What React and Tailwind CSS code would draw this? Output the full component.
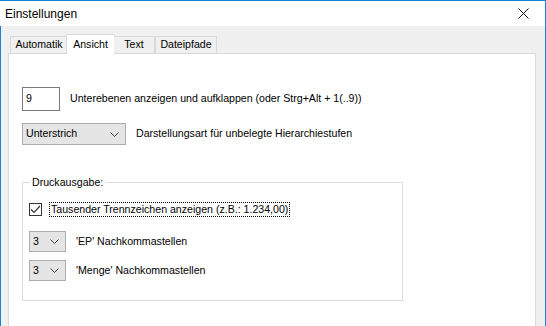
import React from 'react';

const font = { fontFamily: '"Liberation Sans", Arial, sans-serif' };

function Chevron() {
  return (
    <svg width="9" height="5" viewBox="0 0 9 5" className="shrink-0">
      <path d="M0.5 0.5 L4.5 4.5 L8.5 0.5" fill="none" stroke="#404040" strokeWidth="1" />
    </svg>
  );
}

function Combo({ value, w }) {
  return (
    <div className={`flex items-center justify-between h-[21px] bg-[#e5e5e5] border border-[#acacac] pl-[3px] pr-[6px] ${w}`}>
      <span>{value}</span>
      <Chevron />
    </div>
  );
}

function App() {
  const tabs = ['Automatik', 'Ansicht', 'Text', 'Dateipfade'];
  const widths = ['w-[57px]', 'w-[49px]', 'w-[41px]', 'w-[62px]'];

  return (
    <div className="w-[546px] h-[326px] overflow-hidden text-[10.6px] text-black" style={font}>
      <div className="h-[26px] bg-white flex items-center justify-between pl-[5px] pr-[16px] border-r border-[#1883d7] border-t">
        <span className="text-[12px] text-black">Einstellungen</span>
        <svg width="11" height="11" viewBox="0 0 11 11">
          <path d="M0.5 0.5 L10.5 10.5 M10.5 0.5 L0.5 10.5" stroke="#111" strokeWidth="1" />
        </svg>
      </div>
      <div className="h-[300px] bg-[#f0f0f0] border-l border-r border-[#1883d7] pl-[7px] pr-[9px] pt-[7px]">
        <div className="flex items-end h-[20px] pl-[2px] relative z-10">
          {tabs.map((t, i) => (
            <div
              key={t}
              className={
                i === 1
                  ? `h-[20px] -mb-px bg-white border border-b-0 border-[#d9d9d9] flex items-center justify-center ${widths[i]} -mx-[1px]`
                  : `h-[17px] bg-[#f0f0f0] border border-b-0 border-[#d9d9d9] flex items-center justify-center ${widths[i]} ${i === 2 ? 'border-l-0' : ''} ${i === 0 ? 'border-r-0' : ''}`
              }
            >
              {t}
            </div>
          ))}
        </div>
        <div className="h-[290px] bg-white border border-[#d9d9d9] pl-[13px] pt-[33px]">
          <div className="flex items-center gap-[10px]">
            <div className="w-[38px] h-[24px] border border-[#7a7a7a] bg-white flex items-center pl-[3px]">9</div>
            <span>Unterebenen anzeigen und aufklappen (oder Strg+Alt + 1(..9))</span>
          </div>
          <div className="flex items-center gap-[10px] mt-[12px]">
            <Combo value="Unterstrich" w="w-[104px] h-[22px]" />
            <span>Darstellungsart für unbelegte Hierarchiestufen</span>
          </div>
          <div className="relative mt-[37px] w-[381px] h-[119px] border border-[#dcdcdc] pl-[6px] pt-[19px]">
            <span className="absolute -top-[8px] left-[7px] bg-white px-[2px]">Druckausgabe:</span>
            <div className="flex items-center gap-[7px]">
              <div className="w-[13px] h-[13px] border border-[#333] bg-white flex items-center justify-center">
                <svg width="11" height="9" viewBox="0 0 11 9">
                  <path d="M1 4.5 L4 7.5 L10 1" fill="none" stroke="#333" strokeWidth="1.2" />
                </svg>
              </div>
              <span className="border border-dotted border-black px-[1px] leading-[13px]">Tausender Trennzeichen anzeigen (z.B.: 1.234,00)</span>
            </div>
            <div className="flex items-center gap-[10px] mt-[14px]">
              <Combo value="3" w="w-[37px]" />
              <span>'EP' Nachkommastellen</span>
            </div>
            <div className="flex items-center gap-[10px] mt-[8px]">
              <Combo value="3" w="w-[37px]" />
              <span>'Menge' Nachkommastellen</span>
            </div>
          </div>
        </div>
      </div>
    </div>
  );
}

export default App;
